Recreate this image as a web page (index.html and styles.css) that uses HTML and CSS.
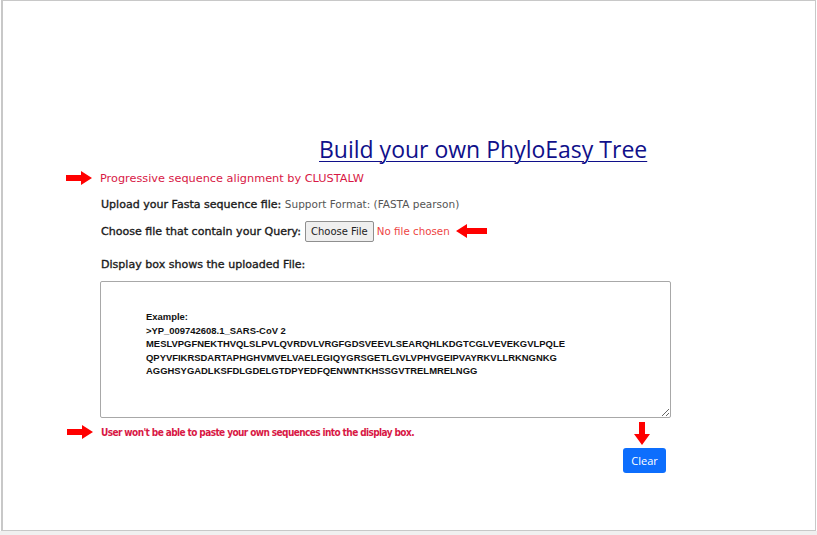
FILE: index.html
```html
<!DOCTYPE html>
<html>
<head>
<meta charset="utf-8">
<link rel="stylesheet" href="styles.css">
</head>
<body>
<div class="frame">
  <div class="page">
    <h1 class="title"><a href="#">Build your own PhyloEasy Tree</a></h1>
    <div class="row note-row">
      <svg class="arrow-right" width="26" height="14" viewBox="0 0 26 14"><polygon points="0,4 15,4 15,0 26,7 15,14 15,10 0,10" fill="#f00"/></svg>
      <span class="note">Progressive sequence alignment by CLUSTALW</span>
    </div>
    <p class="line"><span class="label">Upload your Fasta sequence file:</span> <span class="muted">Support Format: (FASTA pearson)</span></p>
    <div class="line file-line">
      <span class="label">Choose file that contain your Query:</span>
      <button class="file-btn" type="button">Choose File</button>
      <span class="nofile">No file chosen</span>
      <svg class="arrow-left" width="31" height="14" viewBox="0 0 31 14"><polygon points="31,4 11,4 11,0 0,7 11,14 11,10 31,10" fill="#f00"/></svg>
    </div>
    <p class="line display-label"><span class="label">Display box shows the uploaded File:</span></p>
    <textarea class="box" readonly>Example:
&gt;YP_009742608.1_SARS-CoV 2
MESLVPGFNEKTHVQLSLPVLQVRDVLVRGFGDSVEEVLSEARQHLKDGTCGLVEVEKGVLPQLE
QPYVFIKRSDARTAPHGHVMVELVAELEGIQYGRSGETLGVLVPHVGEIPVAYRKVLLRKNGNKG
AGGHSYGADLKSFDLGDELGTDPYEDFQENWNTKHSSGVTRELMRELNGG</textarea>
    <div class="row warn-row">
      <svg class="arrow-right" width="26" height="14" viewBox="0 0 26 14"><polygon points="0,4 15,4 15,0 26,7 15,14 15,10 0,10" fill="#f00"/></svg>
      <span class="warn">User won't be able to paste your own sequences into the display box.</span>
    </div>
    <div class="actions">
      <svg class="arrow-down" width="16" height="23" viewBox="0 0 16 23"><polygon points="5,0 11,0 11,12 16,12 8,23 0,12 5,12" fill="#f00"/></svg>
      <button class="clear" type="button">Clear</button>
    </div>
  </div>
</div>
<div class="statusbar"></div>
</body>
</html>
```
FILE: styles.css
```css
html, body {
  margin: 0;
  padding: 0;
  background: #fff;
}
body {
  width: 817px;
  height: 535px;
  overflow: hidden;
  font-family: "DejaVu Sans", Verdana, sans-serif;
}
.frame {
  box-sizing: border-box;
  height: 531px;
  margin-left: 1px;
  width: 815px;
  border: 1px solid #c8c8c8;
  border-left-width: 2px;
}
.statusbar {
  height: 4px;
  background: #f0f0f0;
}
.page {
  padding-top: 133px;
}
.title {
  margin: 0;
  padding-left: 316px;
  font-family: "Open Sans", "Noto Sans", sans-serif;
  font-weight: 400;
  font-size: 23px;
  line-height: 31px;
}
.title a {
  color: #10108a;
  text-decoration: underline;
  text-decoration-thickness: 1px;
  text-underline-offset: 3px;
}
.row {
  display: flex;
  align-items: center;
}
.note-row {
  margin-top: 2px;
  padding-left: 63px;
  height: 22px;
}
.arrow-right {
  display: block;
  margin-right: 8px;
}
.note {
  color: #d81845;
  font-size: 11.3px;
}
.line {
  margin: 0;
  padding-left: 98px;
  font-size: 11.05px;
  color: #222;
}
p.line {
  margin-top: 5px;
  height: 20px;
  line-height: 20px;
}
.label {
  font-weight: 400;
  color: #1a1a1a;
  -webkit-text-stroke: 0.35px #1a1a1a;
}
.muted {
  color: #555;
  font-size: 10.5px;
}
.file-line {
  display: flex;
  align-items: center;
  margin-top: 6px;
  height: 22px;
}
.file-btn {
  margin-left: 4px;
  height: 21px;
  padding: 0 5px;
  border: 1px solid #8f8f8f;
  border-radius: 2px;
  background: #efefef;
  font-family: "DejaVu Sans", sans-serif;
  font-size: 10px;
  color: #222;
}
.nofile {
  margin-left: 3px;
  color: #e44;
  font-size: 10.3px;
}
.arrow-left {
  display: block;
  margin-left: 6px;
}
.display-label {
  margin-top: 13px !important;
}
.box {
  display: block;
  box-sizing: border-box;
  margin: 6px 0 0 97px;
  width: 571px;
  height: 137px;
  padding: 28px 44px 20px 45px;
  border: 1px solid #a8a8a8;
  border-radius: 2px;
  font-family: "Liberation Sans", Arial, sans-serif;
  font-weight: 700;
  font-size: 9.45px;
  line-height: 13.5px;
  color: #111;
  resize: both;
  overflow: hidden;
}
.warn-row {
  padding-left: 64px;
  margin-top: 4px;
  height: 20px;
}
.warn {
  color: #d81845;
  font-family: "DejaVu Sans Condensed", "DejaVu Sans", sans-serif;
  font-stretch: condensed;
  font-weight: 700;
  font-size: 10px;
  letter-spacing: -0.6px;
}
.actions {
  display: flex;
  flex-direction: column;
  align-items: flex-start;
  width: 44px;
  margin-left: 620px;
  margin-top: -20px;
}
.arrow-down {
  display: block;
  margin-left: 11px;
}
.clear {
  margin-top: 3px;
  width: 43px;
  height: 25px;
  border: none;
  border-radius: 3px;
  background: #0d6efd;
  color: #fff;
  font-family: "Open Sans", sans-serif;
  font-size: 11px;
  padding: 0;
}
```
